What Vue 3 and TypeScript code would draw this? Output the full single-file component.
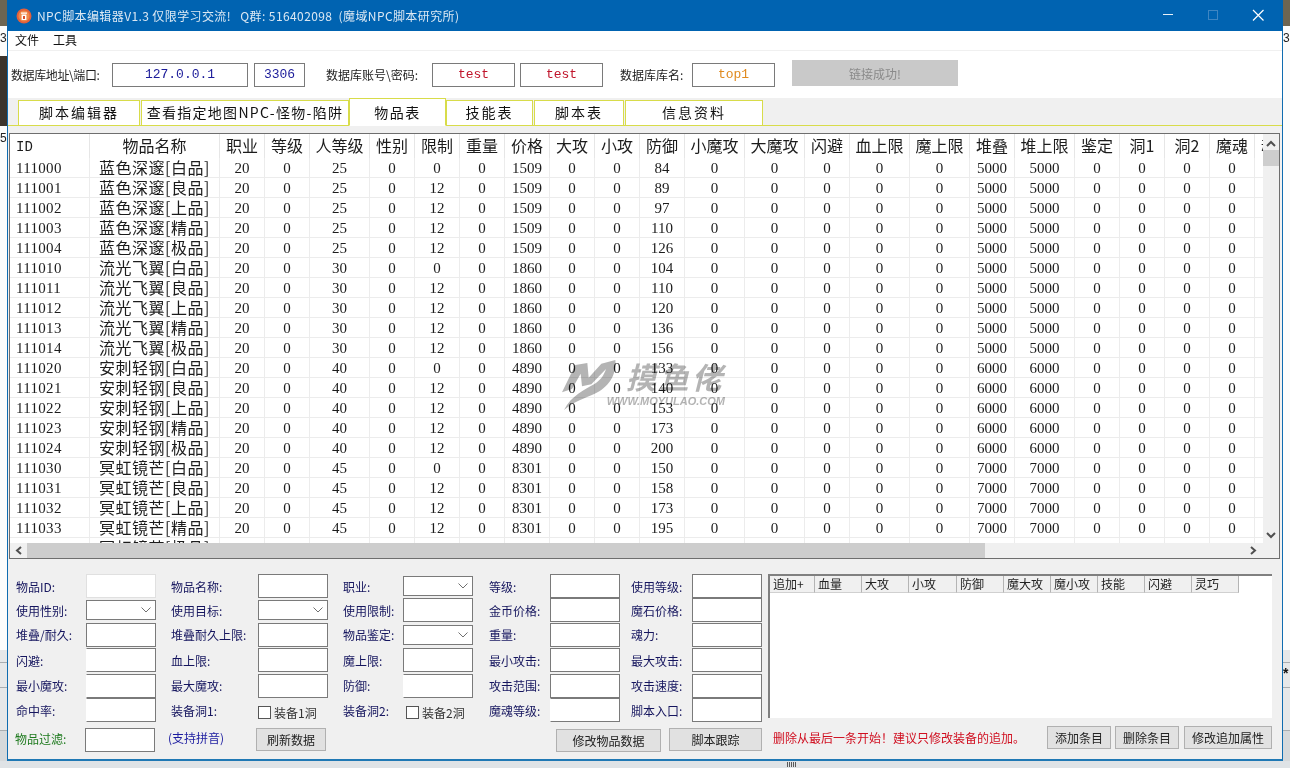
<template>
  <div class="desktop">
    <div class="edge edge-left">
      <div class="edge-photo edge-photo-a" />
      <div class="edge-text">3</div>
      <div class="edge-photo edge-photo-b" />
      <div class="edge-text">5</div>
      <div class="edge-fill" />
      <div class="edge-cell cell-a" />
      <div class="edge-cell cell-b" />
      <div class="edge-cell cell-c" />
      <div class="edge-cell cell-d" />
    </div>

    <div class="window">
      <header class="titlebar">
        <svg class="app-icon" width="16" height="16" viewBox="0 0 16 16">
          <circle cx="8" cy="8" r="7.500" fill="#e4603a" />
          <circle cx="8" cy="8" r="5.500" fill="#f08a4a" />
          <path d="M5 4.500h6v1.200H5zM5.600 6.500h4.800v5.500H5.600z" fill="#fff" />
          <path d="M7 8h2v3H7z" fill="#d9502e" />
        </svg>
        <span class="title-text">NPC脚本编辑器V1.3 仅限学习交流!&nbsp;&nbsp; Q群: 516402098&nbsp;&nbsp;(魔域NPC脚本研究所)</span>
        <div class="win-controls">
          <svg width="46" height="31" viewBox="0 0 46 31"><path d="M18 14.500h10" stroke="#e8f1f8" /></svg>
          <svg width="46" height="31" viewBox="0 0 46 31"><rect x="17.500" y="10.500" width="9" height="9" fill="none" stroke="#3f86c2" /></svg>
          <svg width="46" height="31" viewBox="0 0 46 31"><path d="M16 10l10.500 10.500M26.500 10L16 20.500" stroke="#fff" stroke-width="1.200" /></svg>
        </div>
      </header>

      <nav class="menubar">
        <span>文件</span>
        <span>工具</span>
      </nav>

      <section class="toolbar">
        <label class="tb-label tb-addr">数据库地址\端口:</label>
        <input class="tb-input ip" value="127.0.0.1" readonly />
        <input class="tb-input port" value="3306" readonly />
        <label class="tb-label tb-account">数据库账号\密码:</label>
        <input class="tb-input cred" value="test" readonly />
        <input class="tb-input cred" value="test" readonly />
        <label class="tb-label tb-db">数据库库名:</label>
        <input class="tb-input db" value="top1" readonly />
        <button class="connect" disabled>链接成功!</button>
      </section>

      <div class="tabs">
        <div
          v-for="tab in tabs"
          :key="tab.name"
          class="tab"
          :class="{ active: tab.active, dense: tab.dense, spaced: tab.spaced }"
          :style="{ width: tab.width + 'px' }"
        >
          {{ tab.name }}
        </div>
      </div>

      <div class="grid">
        <div class="grid-body">
          <div class="grid-view">
            <table class="items">
              <colgroup>
                <col v-for="col in columns" :key="col.title" :style="{ width: col.width + 'px' }" />
              </colgroup>
              <thead>
                <tr>
                  <th v-for="col in columns" :key="col.title" :class="{ first: col.title === 'ID' }">{{ col.title }}</th>
                </tr>
              </thead>
              <tbody>
                <tr v-for="row in rows" :key="row[0]">
                  <td v-for="(value, i) in row" :key="i" :class="{ first: i === 0, name: i === 1 }">{{ value }}</td>
                </tr>
              </tbody>
            </table>
            <div class="watermark">
              <svg class="wm-logo" width="70" height="60" viewBox="0 0 210 180">
                <path
                  d="M12 112L52 30L88 24L92 68L130 26L172 15C176 62 150 98 110 116C85 128 45 140 18 165C40 122 80 104 108 88C128 76 138 60 144 42L100 88L72 94L68 56L42 102Z"
                  fill="#b4b4b4"
                />
              </svg>
              <div class="wm-text">
                <div class="wm-cn">摸鱼佬</div>
                <div class="wm-url">WWW.MOYULAO.COM</div>
              </div>
            </div>
          </div>
          <div class="vscroll">
            <svg width="16" height="14" viewBox="0 0 16 14"><path d="M4 10l4-4 4 4" fill="none" stroke="#505050" stroke-width="2" /></svg>
            <div class="v-thumb" />
            <div class="v-track" />
            <svg width="16" height="14" viewBox="0 0 16 14"><path d="M4 4l4 4 4-4" fill="none" stroke="#505050" stroke-width="2" /></svg>
          </div>
        </div>
        <div class="hscroll">
          <svg class="h-arrow" width="17" height="15" viewBox="0 0 17 15"><path d="M11 4l-4 3.500 4 3.500" fill="none" stroke="#505050" stroke-width="2" /></svg>
          <div class="h-thumb" />
          <div class="h-track" />
          <svg class="h-arrow" width="17" height="15" viewBox="0 0 17 15"><path d="M6 4l4 3.500-4 3.500" fill="none" stroke="#505050" stroke-width="2" /></svg>
          <div class="h-corner" />
        </div>
      </div>

      <section class="panel">
        <div class="panel-top">
          <div class="form">
            <template v-for="field in fields" :key="field.label">
              <label class="f-label">{{ field.label }}</label>
              <div v-if="field.kind === 'select'" class="f-select">
                <svg width="10" height="6" viewBox="0 0 10 6"><path d="M0.500 0.500L5 5l4.500-4.500" fill="none" stroke="#707070" /></svg>
              </div>
              <label v-else-if="field.kind === 'check'" class="f-check">
                <span class="box" />{{ field.text }}
              </label>
              <input v-else class="f-input" :class="field.kind" />
            </template>
          </div>
          <div class="attr-list">
            <div class="attr-head">
              <div v-for="col in attrColumns" :key="col.title" class="attr-col" :style="{ width: col.width + 'px' }">{{ col.title }}</div>
            </div>
          </div>
        </div>

        <div class="panel-bottom">
          <label class="filter-label">物品过滤:</label>
          <input class="f-input filter-input" />
          <span class="pinyin">(支持拼音)</span>
          <button class="btn btn-refresh">刷新数据</button>
          <button class="btn btn-save">修改物品数据</button>
          <button class="btn btn-trace">脚本跟踪</button>
          <span class="warn">删除从最后一条开始！建议只修改装备的追加。</span>
          <button class="btn btn-add">添加条目</button>
          <button class="btn btn-del">删除条目</button>
          <button class="btn btn-edit">修改追加属性</button>
        </div>
      </section>
    </div>

    <div class="edge edge-right">
      <div class="edge-photo edge-photo-a" />
      <div class="edge-text edge-text-cut">3</div>
      <div class="edge-fill" />
      <div class="edge-cell cell-a" />
      <div class="edge-cell cell-b edge-mark">*</div>
      <div class="edge-cell cell-c" />
      <div class="edge-cell cell-d" />
    </div>

    <div class="taskstrip">
      <div class="grip" />
    </div>
  </div>
</template>

<script setup lang="ts">
interface Column {
  title: string
  width: number
}

interface Field {
  label: string
  kind: string
  text?: string
}

interface Tab {
  name: string
  width: number
  active?: boolean
  dense?: boolean
  spaced?: boolean
}

const tabs: Tab[] = [
  { name: '脚本编辑器', width: 122, spaced: true },
  { name: '查看指定地图NPC-怪物-陷阱', width: 208, dense: true },
  { name: '物品表', width: 97, active: true },
  { name: '技能表', width: 87, spaced: true },
  { name: '脚本表', width: 90, spaced: true },
  { name: '信息资料', width: 138 },
]

const columns: Column[] = [
  { title: 'ID', width: 80 },
  { title: '物品名称', width: 130 },
  { title: '职业', width: 45 },
  { title: '等级', width: 45 },
  { title: '人等级', width: 60 },
  { title: '性别', width: 45 },
  { title: '限制', width: 45 },
  { title: '重量', width: 45 },
  { title: '价格', width: 45 },
  { title: '大攻', width: 45 },
  { title: '小攻', width: 45 },
  { title: '防御', width: 45 },
  { title: '小魔攻', width: 60 },
  { title: '大魔攻', width: 60 },
  { title: '闪避', width: 45 },
  { title: '血上限', width: 60 },
  { title: '魔上限', width: 60 },
  { title: '堆叠', width: 45 },
  { title: '堆上限', width: 60 },
  { title: '鉴定', width: 45 },
  { title: '洞1', width: 45 },
  { title: '洞2', width: 45 },
  { title: '魔魂', width: 45 },
  { title: '魂力', width: 45 },
]

const grades = ['白品', '良品', '上品', '精品', '极品']

const groups = [
  { id: 111000, name: '蓝色深邃', level: 25, price: 1509, stack: 5000, defense: [84, 89, 97, 110, 126] },
  { id: 111010, name: '流光飞翼', level: 30, price: 1860, stack: 5000, defense: [104, 110, 120, 136, 156] },
  { id: 111020, name: '安刺轻钢', level: 40, price: 4890, stack: 6000, defense: [133, 140, 153, 173, 200] },
  { id: 111030, name: '冥虹镜芒', level: 45, price: 8301, stack: 7000, defense: [150, 158, 173, 195, 225] },
]

const rows = groups.flatMap((group) =>
  grades.map((grade, i) => [
    String(group.id + i),
    `${group.name}[${grade}]`,
    20, 0, group.level, 0,
    i === 0 ? 0 : 12,
    0, group.price, 0, 0,
    group.defense[i],
    0, 0, 0, 0, 0,
    group.stack, group.stack,
    0, 0, 0, 0, 0,
  ]),
)

const fields: Field[] = [
  { label: '物品ID:', kind: 'soft' },
  { label: '物品名称:', kind: 'text' },
  { label: '职业:', kind: 'select' },
  { label: '等级:', kind: 'text' },
  { label: '使用等级:', kind: 'text' },
  { label: '使用性别:', kind: 'select' },
  { label: '使用目标:', kind: 'select' },
  { label: '使用限制:', kind: 'text' },
  { label: '金币价格:', kind: 'text' },
  { label: '魔石价格:', kind: 'text' },
  { label: '堆叠/耐久:', kind: 'text' },
  { label: '堆叠耐久上限:', kind: 'text' },
  { label: '物品鉴定:', kind: 'select' },
  { label: '重量:', kind: 'text' },
  { label: '魂力:', kind: 'text' },
  { label: '闪避:', kind: 'open' },
  { label: '血上限:', kind: 'text' },
  { label: '魔上限:', kind: 'text' },
  { label: '最小攻击:', kind: 'text' },
  { label: '最大攻击:', kind: 'text' },
  { label: '最小魔攻:', kind: 'open' },
  { label: '最大魔攻:', kind: 'text' },
  { label: '防御:', kind: 'open' },
  { label: '攻击范围:', kind: 'text' },
  { label: '攻击速度:', kind: 'text' },
  { label: '命中率:', kind: 'open' },
  { label: '装备洞1:', kind: 'check', text: '装备1洞' },
  { label: '装备洞2:', kind: 'check', text: '装备2洞' },
  { label: '魔魂等级:', kind: 'open' },
  { label: '脚本入口:', kind: 'text' },
]

const attrColumns: Column[] = [
  { title: '追加+', width: 45 },
  { title: '血量', width: 47 },
  { title: '大攻', width: 47 },
  { title: '小攻', width: 48 },
  { title: '防御', width: 47 },
  { title: '魔大攻', width: 47 },
  { title: '魔小攻', width: 47 },
  { title: '技能', width: 47 },
  { title: '闪避', width: 47 },
  { title: '灵巧', width: 47 },
]
</script>

<style>
html,
body {
  margin: 0;
  overflow: hidden;
}
</style>

<style scoped>
.desktop {
  display: grid;
  grid-template-columns: 7px 1276px 7px;
  grid-template-rows: 761px 7px;
  width: 1290px;
  height: 768px;
  overflow: hidden;
  background: #dfe3e6;
  font-family: "Noto Sans CJK SC", "Liberation Sans", sans-serif;
  font-size: 12px;
  color: #111;
}

.edge {
  display: flex;
  flex-direction: column;
  background: #fbfcfc;
  overflow: hidden;
}

.edge-photo {
  flex: none;
  background: #4a443c;
}

.edge-photo-a {
  height: 26px;
  background: #6d6552;
}

.edge-photo-b {
  height: 70px;
  margin-top: 2px;
  background: #3b342c;
}

.edge-text {
  height: 28px;
  padding-top: 5px;
  box-sizing: border-box;
  font: 12px "Liberation Sans", sans-serif;
  color: #222;
}

.edge-fill {
  flex: 1;
  background: #fbfcfc;
}

.edge-cell {
  flex: none;
  box-sizing: border-box;
  border-top: 1px solid #a9adb0;
  background: #e6e8e9;
}

.cell-a {
  height: 12px;
  border-top: none;
}

.cell-b {
  height: 25px;
}

.cell-c {
  height: 43px;
}

.cell-d {
  height: 31px;
  background: #d6d9db;
}

.edge-mark {
  font: 700 14px/20px "Liberation Sans", sans-serif;
  color: #111;
}

.window {
  display: flex;
  flex-direction: column;
  min-width: 0;
  box-sizing: border-box;
  border-left: 1px solid #0f6cb0;
  border-right: 1px solid #0f6cb0;
  border-bottom: 2px solid #1f78b4;
  background: #f0f0f0;
}

.titlebar {
  display: flex;
  align-items: center;
  flex: none;
  height: 31px;
  margin: 0 -1px;
  padding-left: 9px;
  background: #0063b1;
  color: #dbe8f3;
}

.app-icon {
  flex: none;
}

.title-text {
  margin-left: 5px;
  white-space: nowrap;
  font-size: 12px;
  letter-spacing: 0.400px;
}

.win-controls {
  display: flex;
  margin-left: auto;
}

.menubar {
  display: flex;
  flex: none;
  gap: 14px;
  height: 19px;
  padding-left: 7px;
  line-height: 17px;
  background: #fff;
  border-bottom: 1px solid #f0f0f0;
  font-size: 12px;
}

.toolbar {
  display: flex;
  align-items: center;
  flex: none;
  height: 47px;
  background: #fff;
}

.tb-label {
  flex: none;
  font-size: 12px;
  color: #222;
  white-space: nowrap;
}

.tb-addr {
  width: 101px;
  margin-left: 3px;
  letter-spacing: -0.400px;
}

.tb-account {
  width: 106px;
  margin-left: 21px;
}

.tb-db {
  width: 72px;
  margin-left: 17px;
}

.tb-input {
  flex: none;
  box-sizing: border-box;
  height: 24px;
  padding: 0;
  border: 1px solid #7a7a7a;
  outline: none;
  background: #fff;
  text-align: center;
  font: 13px "Liberation Mono", monospace;
}

.ip {
  width: 136px;
  color: #1c1c9a;
}

.port {
  width: 51px;
  margin-left: 6px;
  color: #1c1c9a;
}

.cred {
  width: 83px;
  color: #c0142a;
}

.cred + .cred {
  margin-left: 5px;
}

.db {
  width: 83px;
  color: #e08a1e;
}

.connect {
  flex: none;
  width: 166px;
  height: 26px;
  margin-left: 17px;
  margin-top: -3px;
  border: none;
  background: #c9c9c9;
  color: #8a8a8a;
  font: 12px "Noto Sans CJK SC", sans-serif;
}

.tabs {
  display: flex;
  align-items: flex-end;
  flex: none;
  height: 28px;
  padding-left: 10px;
  background: #f0f0f0;
  border-bottom: 1px solid #d8dc4a;
  box-sizing: border-box;
}

.tab {
  flex: none;
  box-sizing: border-box;
  height: 26px;
  margin-bottom: -1px;
  border: 1px solid #d8dc4a;
  background: #fff;
  text-align: center;
  line-height: 23px;
  font-size: 14px;
  letter-spacing: 2px;
  white-space: nowrap;
}

.tab.spaced {
  margin-right: 1px;
}

.tab.dense {
  letter-spacing: 1.300px;
}

.tab.active {
  height: 28px;
  line-height: 27px;
  letter-spacing: 1.500px;
  border-bottom-color: #fff;
}

.grid {
  display: flex;
  flex-direction: column;
  flex: none;
  height: 426px;
  box-sizing: border-box;
  margin: 7px 2px 0 1px;
  border: 1px solid #6e6e6e;
  background: #fff;
}

.grid-body {
  display: flex;
  flex: 1;
  min-height: 0;
}

.grid-view {
  position: relative;
  flex: 1;
  min-width: 0;
  overflow: hidden;
}

.items {
  width: 1290px;
  table-layout: fixed;
  border-collapse: separate;
  border-spacing: 0;
  font-family: "Liberation Serif", "Noto Sans CJK SC", serif;
  font-size: 15px;
  color: #1c1c1c;
}

.items th {
  box-sizing: border-box;
  height: 24px;
  padding: 0 0 2px;
  border-right: 1px solid #e6e6e6;
  font-family: "Noto Sans CJK SC", sans-serif;
  font-size: 16px;
  font-weight: 400;
  line-height: 22px;
  white-space: nowrap;
}

.items th.first {
  padding: 2px 0 0 6px;
  text-align: left;
  font-family: "Liberation Mono", monospace;
  font-size: 14px;
}

.items td {
  box-sizing: border-box;
  height: 20px;
  padding: 1px 0 0;
  border-right: 1px solid #ececec;
  border-bottom: 1px solid #ececec;
  text-align: center;
  line-height: 18px;
  white-space: nowrap;
}

.items td.first {
  padding-left: 6px;
  text-align: left;
  letter-spacing: 0.300px;
}

.items td.name {
  padding: 0 0 0 9px;
  text-align: left;
  font-family: "Noto Sans CJK SC", sans-serif;
  font-size: 16px;
  line-height: 19px;
  letter-spacing: 0.500px;
}

.watermark {
  position: absolute;
  left: 548px;
  top: 221px;
  display: flex;
  mix-blend-mode: multiply;
  pointer-events: none;
}

.wm-logo {
  flex: none;
}

.wm-text {
  display: flex;
  flex-direction: column;
  align-items: flex-end;
  margin-top: 2px;
  margin-left: -2px;
}

.wm-cn {
  font-family: "Noto Sans CJK SC", sans-serif;
  font-size: 30px;
  font-weight: 700;
  font-style: italic;
  line-height: 38px;
  letter-spacing: 3px;
  color: #b4b4b4;
}

.wm-url {
  margin-left: -22px;
  font-family: "Liberation Sans", sans-serif;
  font-size: 11px;
  font-weight: 700;
  font-style: italic;
  line-height: 12px;
  white-space: nowrap;
  color: #b4b4b4;
}

.vscroll {
  display: flex;
  flex-direction: column;
  flex: none;
  width: 16px;
  padding-top: 2px;
  box-sizing: border-box;
  background: #f0f0f0;
}

.v-thumb {
  flex: none;
  height: 16px;
  background: #cdcdcd;
}

.v-track {
  flex: 1;
}

.hscroll {
  display: flex;
  align-items: center;
  flex: none;
  height: 15px;
  background: #f0f0f0;
}

.h-arrow {
  flex: none;
}

.h-thumb {
  flex: none;
  width: 958px;
  height: 15px;
  background: #cdcdcd;
}

.h-track {
  flex: 1;
}

.h-corner {
  flex: none;
  width: 17px;
}

.panel {
  display: flex;
  flex-direction: column;
  flex: 1;
  min-height: 0;
  padding: 15px 10px 0 8px;
}

.panel-top {
  display: flex;
  flex: none;
}

.form {
  display: grid;
  flex: none;
  grid-template-columns: 70px 70px 102px 70px 75px 70px 77px 70px 72px 70px;
  grid-template-rows: 24px 24px 25px 26px 25px 24px;
  align-items: center;
}

.f-label {
  font-size: 12px;
  color: #15155e;
  white-space: nowrap;
}

.form > .f-label:nth-child(10n + 3),
.form > .f-label:nth-child(10n + 5) {
  padding-left: 15px;
}

.form > .f-label:nth-child(10n + 7) {
  padding-left: 16px;
}

.form > .f-label:nth-child(10n + 9) {
  padding-left: 11px;
}

.f-input {
  box-sizing: border-box;
  width: 70px;
  height: 24px;
  padding: 0;
  border: 1px solid #7a7a7a;
  outline: none;
  background: #fff;
}

.f-input.soft {
  border-color: #e0e0e0;
}

.f-input.open {
  border-left-color: #fff;
}

.f-select {
  display: flex;
  align-items: center;
  justify-content: flex-end;
  box-sizing: border-box;
  width: 70px;
  height: 20px;
  padding-right: 4px;
  border: 1px solid #7a7a7a;
  background: #fff;
}

.f-check {
  display: flex;
  align-items: center;
  gap: 3px;
  margin-top: 4px;
  color: #333;
  font-size: 12px;
  white-space: nowrap;
}

.form > .f-check:nth-child(n + 55) {
  padding-left: 3px;
}

.box {
  flex: none;
  box-sizing: border-box;
  width: 13px;
  height: 13px;
  border: 1px solid #555;
  background: #fff;
}

.attr-list {
  flex: none;
  box-sizing: border-box;
  width: 504px;
  height: 144px;
  margin-left: 6px;
  border-top: 2px solid #808080;
  border-left: 2px solid #808080;
  background: #fff;
}

.attr-head {
  display: flex;
}

.attr-col {
  flex: none;
  box-sizing: border-box;
  height: 17px;
  padding-left: 3px;
  border-right: 1px solid #b4b4b4;
  border-bottom: 1px solid #d0d0d0;
  background: #f0f0f0;
  font-size: 12px;
  line-height: 16px;
  color: #222;
  white-space: nowrap;
  overflow: hidden;
}

.panel-bottom {
  display: flex;
  align-items: flex-start;
  flex: none;
  margin-top: 4px;
}

.filter-label {
  flex: none;
  width: 70px;
  margin-left: -1px;
  margin-top: 4px;
  font-size: 12px;
  color: #1e7a1e;
}

.filter-input {
  flex: none;
  margin-top: 2px;
}

.pinyin {
  flex: none;
  width: 88px;
  margin-left: 13px;
  margin-top: 3px;
  font-size: 12px;
  color: #1c1ca0;
}

.btn {
  flex: none;
  box-sizing: border-box;
  height: 23px;
  padding: 0;
  border: 1px solid #b0b0b0;
  background: #e1e1e1;
  color: #222;
  font: 12px "Noto Sans CJK SC", sans-serif;
}

.btn-refresh {
  width: 70px;
  margin-top: 2px;
}

.btn-save {
  width: 105px;
  margin-left: 230px;
  margin-top: 3px;
}

.btn-trace {
  width: 93px;
  margin-left: 8px;
  margin-top: 2px;
}

.warn {
  flex: none;
  width: 274px;
  margin-left: 11px;
  margin-top: 3px;
  font-size: 12px;
  color: #d00f20;
  white-space: nowrap;
}

.btn-add {
  width: 64px;
}

.btn-del {
  width: 64px;
  margin-left: 4px;
}

.btn-edit {
  width: 88px;
  margin-left: 5px;
}

.taskstrip {
  grid-column: 1 / -1;
  display: flex;
  padding: 1px 0 0 787px;
  background: #dfe3e6;
}

.grip {
  width: 10px;
  height: 5px;
  background: repeating-linear-gradient(90deg, #5a5a5a 0 1px, transparent 1px 2px);
}
</style>
